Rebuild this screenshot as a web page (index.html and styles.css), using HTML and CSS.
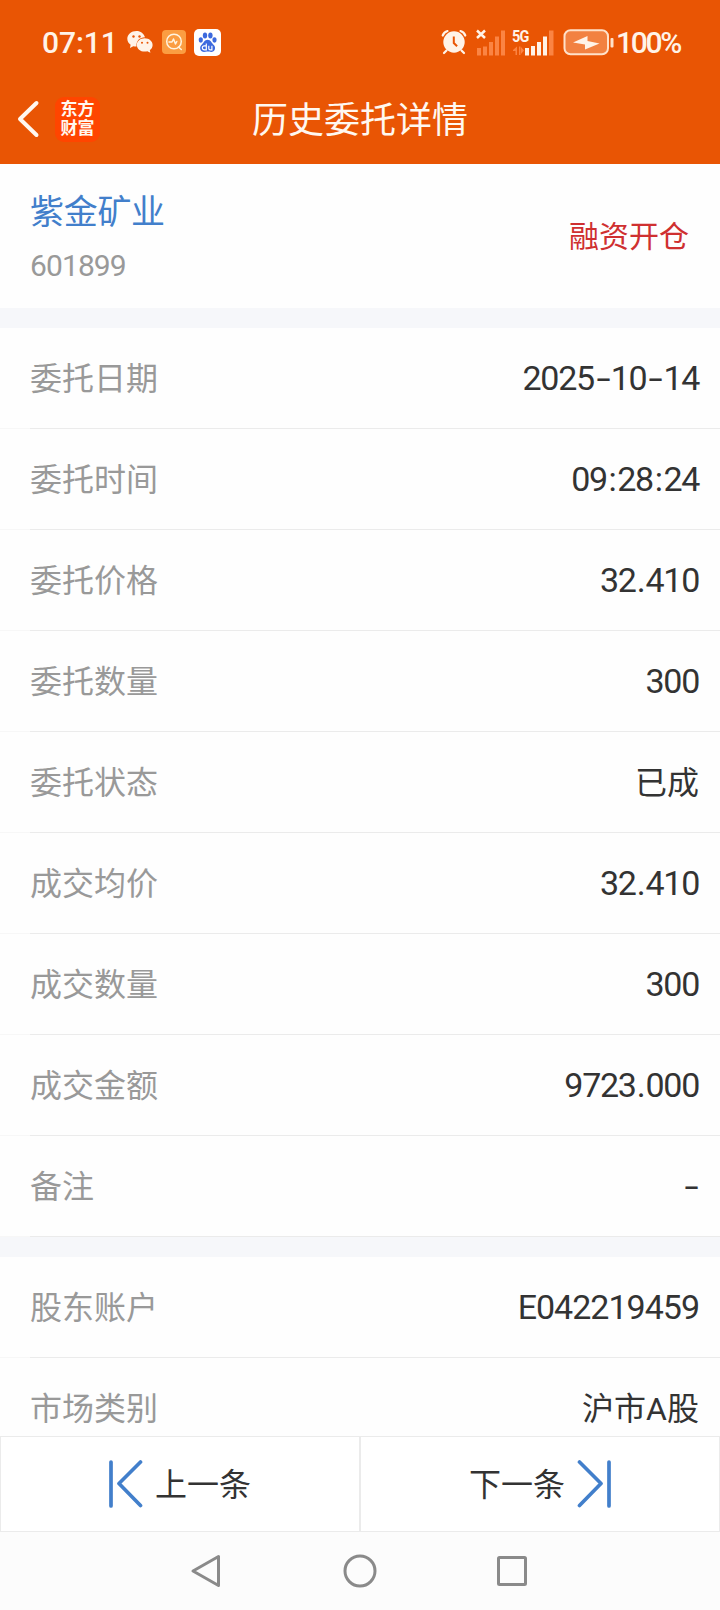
FILE: index.html
```html
<!DOCTYPE html>
<html lang="zh-CN">
<head>
    <meta charset="UTF-8">
    <meta name="viewport" content="width=device-width, initial-scale=1.0">
    <title>历史委托详情</title>
    <link rel="stylesheet" href="styles.css">
</head>
<body>
    <header class="header">
        <div class="status">
            <span class="time">07:11</span>
            <svg class="wechat" width="26" height="24" viewBox="0 0 26 24">
                <path fill="#fff3e8" d="M9.500 1C4.300 1 .3 4.500.3 8.800c0 2.500 1.300 4.600 3.300 6L3 18l3.300-1.800c1 .3 2 .4 3.200.4C9 11 12.500 7.400 18 7.300 17 3.600 13.600 1 9.500 1z"/>
                <path fill="#fff3e8" d="M17.700 8.300c-4.400 0-7.900 2.900-7.900 6.600s3.500 6.700 7.900 6.700c1 0 1.900-.1 2.700-.4l3 1.600-.6-2.700c1.700-1.200 2.800-3 2.800-5.200 0-3.700-3.500-6.600-7.900-6.600z"/>
                <g fill="#e95504"><circle cx="6.500" cy="6.500" r="1.200"/><circle cx="12.500" cy="6.500" r="1.200"/><circle cx="15" cy="12.700" r="1"/><circle cx="20.500" cy="12.700" r="1"/></g>
            </svg>
            <svg class="finder" width="24" height="24" viewBox="0 0 24 24">
                <rect width="24" height="24" rx="4" fill="#fb9d42"/>
                <g fill="none" stroke="#fff3df" stroke-width="1.500" stroke-linecap="round" stroke-linejoin="round">
                    <circle cx="12" cy="11.500" r="7.300"/>
                    <path d="M16.500 17l2.800 2.500M7 12h3l1.500-3 2 5 1.300-2.500"/>
                </g>
            </svg>
            <svg class="baidu" width="27" height="27" viewBox="0 0 27 27">
                <rect width="27" height="27" rx="5" fill="#fff"/>
                <g fill="#3c69de">
                    <ellipse cx="6.800" cy="11" rx="2.100" ry="2.700"/>
                    <ellipse cx="11" cy="6.500" rx="2.200" ry="2.900"/>
                    <ellipse cx="16.400" cy="6.500" rx="2.200" ry="2.900"/>
                    <ellipse cx="20.500" cy="11" rx="2.100" ry="2.700"/>
                    <path d="M13.600 10.800c3 0 4 3.200 6.200 5.200 2.600 2.500 1 7-2.600 7-1.500 0-2.500-.4-3.600-.4s-2 .4-3.500.4c-3.700 0-5.200-4.500-2.700-7 2.200-2 3.200-5.200 6.200-5.200z"/>
                </g>
                <path d="M12.300 14.500v6.300h-2a1.900 1.900 0 0 1 0-4h2M14.800 16.800v2.700q0 1.300 1.300 1.300h1.800v-4" fill="none" stroke="#fff" stroke-width="1.200"/>
            </svg>
            <svg class="alarm" width="26" height="26" viewBox="0 0 26 26">
                <g fill="none" stroke="#fff3e8" stroke-width="2.200" stroke-linecap="round">
                    <path d="M1.700 6.500Q3 3 6.500 2M24.300 6.500Q23 3 19.500 2M5.500 21.500L3 24M20.500 21.500L23 24"/>
                </g>
                <circle cx="13" cy="13" r="10.700" fill="#fff3e8"/>
                <path d="M12.800 7.500V14l3.300 3.200" fill="none" stroke="#e95504" stroke-width="2"/>
            </svg>
            <svg class="signal" width="31" height="27" viewBox="0 0 31 27">
                <path d="M1 1.500l8 7.500M9 1.500L1 9" stroke="#fff3e8" stroke-width="2.500"/>
                <g fill="#fb8443"><rect x="1" y="19" width="4" height="7.500"/><rect x="7" y="17.500" width="4" height="9"/><rect x="13" y="13" width="4" height="13.500"/><rect x="19" y="7.500" width="4" height="19"/><rect x="25" y="1.500" width="4" height="25"/></g>
            </svg>
            <div class="network">
                <span class="network-type">5G</span>
                <svg width="43" height="27" viewBox="0 0 43 27">
                    <path fill="#fb8443" d="M1 21l4-3.500V26H3.500v-4H1zM7 17.500h1.500V26H7zM9 18l3 3.500L9 25z"/>
                    <g fill="#fff3e8"><rect x="13" y="19" width="4" height="7.500"/><rect x="19" y="17" width="4" height="9.500"/><rect x="25" y="13" width="4" height="13.500"/><rect x="31" y="7.500" width="4" height="19"/></g>
                    <rect x="37" y="1.500" width="4.500" height="25" fill="#fb8443"/>
                </svg>
            </div>
            <svg class="battery" width="51" height="27" viewBox="0 0 51 27">
                <rect x="1.500" y="1.300" width="43.500" height="24" rx="6" fill="#f28141" stroke="#ffe1c9" stroke-width="2"/>
                <rect x="47.500" y="9" width="3" height="9.500" rx="1" fill="#ffe1c9"/>
                <path fill="#fff3e8" d="M10 13.500L24.500 7v5l12 2.500L22 20.500v-5z"/>
            </svg>
            <span class="percent">100%</span>
        </div>
        <div class="titlebar">
            <svg class="back" width="24" height="40" viewBox="0 0 24 40">
                <path d="M20.500 4L4 20l16.500 16" fill="none" stroke="#fff8f0" stroke-width="4" stroke-linecap="round" stroke-linejoin="round"/>
            </svg>
            <div class="logo">东方<br>财富</div>
            <h1>历史委托详情</h1>
        </div>
    </header>

    <main class="content">
        <section class="stock">
            <div>
                <div class="stock-name">紫金矿业</div>
                <div class="stock-code">601899</div>
            </div>
            <div class="direction">融资开仓</div>
        </section>

        <section class="list">
            <div class="row"><span class="label">委托日期</span><span class="value">2025<i class="dash">-</i>10<i class="dash">-</i>14</span></div>
            <div class="row"><span class="label">委托时间</span><span class="value">09<i class="colon">:</i>28<i class="colon">:</i>24</span></div>
            <div class="row"><span class="label">委托价格</span><span class="value">32<i class="dot">.</i>410</span></div>
            <div class="row"><span class="label">委托数量</span><span class="value">300</span></div>
            <div class="row"><span class="label">委托状态</span><span class="value text">已成</span></div>
            <div class="row"><span class="label">成交均价</span><span class="value">32<i class="dot">.</i>410</span></div>
            <div class="row"><span class="label">成交数量</span><span class="value">300</span></div>
            <div class="row"><span class="label">成交金额</span><span class="value">9723<i class="dot">.</i>000</span></div>
            <div class="row"><span class="label">备注</span><span class="value"><i class="dash">-</i></span></div>
        </section>

        <section class="list">
            <div class="row"><span class="label">股东账户</span><span class="value account">E042219459</span></div>
            <div class="row"><span class="label">市场类别</span><span class="value text">沪市A股</span></div>
        </section>
    </main>

    <div class="pager">
        <div class="pager-btn">
            <svg width="34" height="48" viewBox="0 0 34 48">
                <path d="M2 2v44M31.500 2L10 23.500 31.500 45.500" fill="none" stroke="#427fcb" stroke-width="3.700" stroke-linecap="round" stroke-linejoin="round"/>
            </svg>
            <span>上一条</span>
        </div>
        <div class="pager-btn">
            <span>下一条</span>
            <svg width="34" height="48" viewBox="0 0 34 48">
                <path d="M32 2v44M2.500 2L24 23.500 2.500 45.500" fill="none" stroke="#427fcb" stroke-width="3.700" stroke-linecap="round" stroke-linejoin="round"/>
            </svg>
        </div>
    </div>

    <nav class="navbar">
        <svg width="36" height="36" viewBox="0 0 36 36"><path d="M28.500 3.500v29L3 18z"/></svg>
        <svg width="36" height="36" viewBox="0 0 36 36"><circle cx="18" cy="18" r="15"/></svg>
        <svg width="36" height="36" viewBox="0 0 36 36"><rect x="4.500" y="4.500" width="27" height="27" rx="1"/></svg>
    </nav>
</body>
</html>
```
FILE: styles.css
```css
* {
    box-sizing: border-box;
}

body, html {
    margin: 0;
    padding: 0;
    height: 1610px;
    overflow: hidden;
    font-family: Roboto, "Noto Sans CJK SC", sans-serif;
}

body {
    display: flex;
    flex-direction: column;
    background: #fefefe;
    color: #333;
}

svg {
    display: block;
    flex: none;
}

.header {
    height: 164px;
    flex: none;
    background: #e95504;
    color: #fff8f0;
}

/* status bar */
.status {
    height: 74px;
    padding: 10px 0 0 42px;
    display: flex;
    align-items: center;
    color: #fff3e8;
    font-weight: 500;
    font-size: 30px;
    line-height: 30px;
}

.time {
    width: 85px;
    padding-top: 1px;
    letter-spacing: -.1px;
}

.finder {
    margin-left: 9px;
}

.baidu {
    margin-left: 8px;
}

.alarm {
    margin-left: 220px;
}

.signal {
    margin-left: 9px;
}

.network {
    margin-left: 5px;
    position: relative;
}

.network-type {
    position: absolute;
    left: 0;
    top: 0;
    font-size: 17px;
    line-height: 15px;
    letter-spacing: -1px;
    font-weight: 700;
    transform: scaleX(.85);
    transform-origin: left;
}

.battery {
    margin-left: 8px;
}

.percent {
    margin-left: 2px;
    padding-top: 1px;
    letter-spacing: -2.3px;
}

.titlebar {
    height: 90px;
    display: flex;
    align-items: center;
    position: relative;
    padding-left: 16px;
}

.logo {
    width: 45px;
    height: 45px;
    margin-left: 15px;
    padding-top: 3px;
    border-radius: 9px;
    background: #ff4500;
    font-size: 17px;
    line-height: 19px;
    font-weight: 700;
    text-align: center;
}

.titlebar h1 {
    position: absolute;
    left: 0;
    right: 0;
    margin: 0;
    padding-top: 4px;
    text-align: center;
    font-size: 36px;
    line-height: 50px;
    font-weight: 400;
}

.content {
    flex: 1;
    min-height: 0;
    overflow: hidden;
}

.stock {
    height: 144px;
    padding: 0 31px 0 30px;
    display: flex;
    justify-content: space-between;
    align-items: center;
}

.stock-name {
    padding-top: 7px;
    font-size: 34px;
    line-height: 52px;
    letter-spacing: -.3px;
    color: #427fcb;
}

.stock-code {
    font-size: 30px;
    line-height: 56px;
    letter-spacing: -.9px;
    color: #999;
}

.direction {
    padding-bottom: 4px;
    font-size: 30px;
    color: #cf3030;
}

.list {
    border-top: 20px solid #f6f7fa;
}

/* the divider is fainter under the left margin */
.row {
    height: 101px;
    padding: 0 21px 1px 30px;
    background: linear-gradient(to right, #f7f7f7 30px, #ebebeb 30px) bottom / 100% 1px no-repeat;
    display: flex;
    justify-content: space-between;
    align-items: center;
}

.label {
    padding-bottom: 4px;
    font-size: 32px;
    color: #999;
}

.value {
    font-size: 34px;
    letter-spacing: -1.3px;
}

.value i {
    display: inline-block;
    font-style: normal;
    text-align: center;
}

.value.account {
    letter-spacing: -1px;
}

.value.text {
    padding-bottom: 4px;
    font-size: 32px;
    letter-spacing: 0;
}

.dash {
    width: 17px;
    transform: scaleX(1.5);
}

.colon {
    width: 10.5px;
}

.dot {
    width: 10px;
}

/* previous / next */
.pager {
    height: 96px;
    flex: none;
    display: flex;
}

.pager-btn {
    width: 50%;
    display: flex;
    align-items: center;
    justify-content: center;
    gap: 12px;
    font-size: 32px;
    background: #fff;
    border: 1px solid #ebebeb;
}

.pager-btn span {
    padding-bottom: 4px;
}

.navbar {
    height: 78px;
    flex: none;
    display: flex;
    justify-content: center;
    align-items: center;
    gap: 116px;
    background: #fcfcfc;
}

.navbar svg {
    fill: none;
    stroke: #8a8a8a;
    stroke-width: 3;
    stroke-linejoin: round;
}
```
